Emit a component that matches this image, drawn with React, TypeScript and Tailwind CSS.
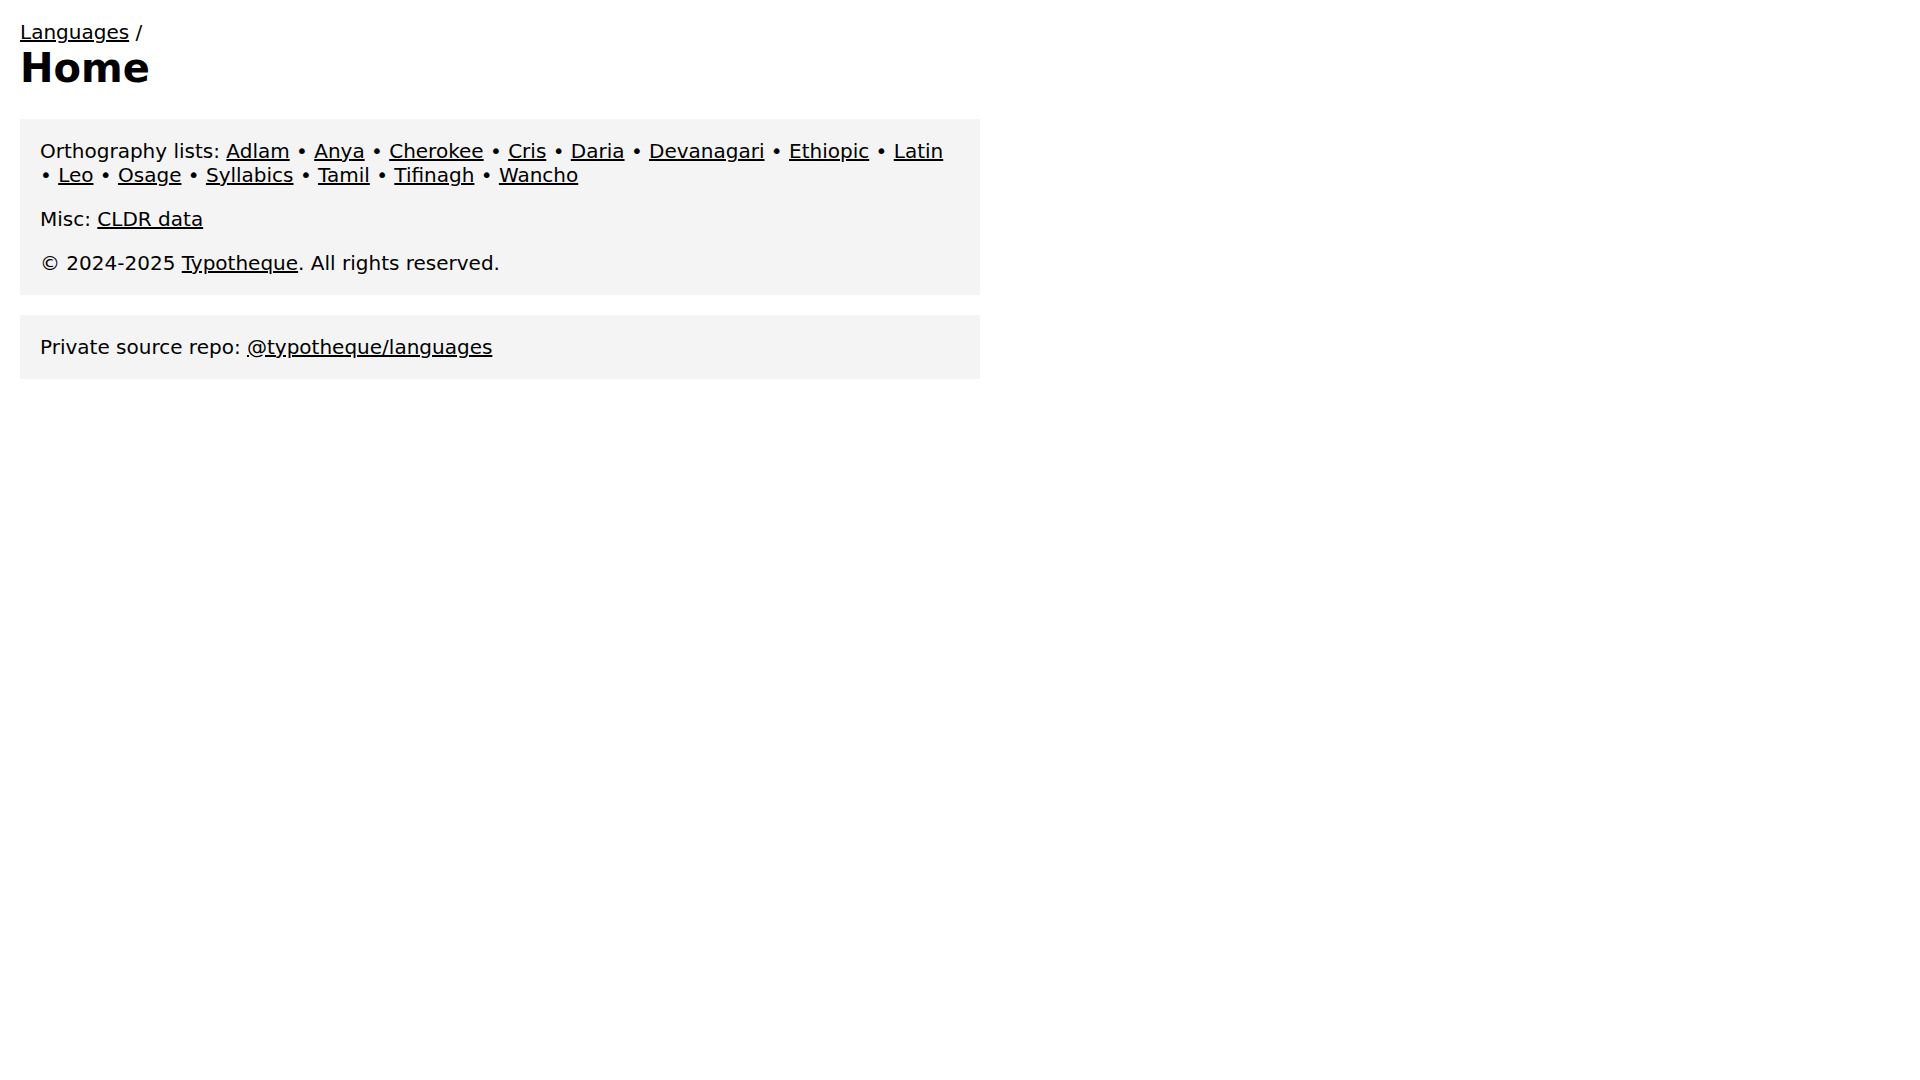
const ORTHOGRAPHIES = [
  'Adlam',
  'Anya',
  'Cherokee',
  'Cris',
  'Daria',
  'Devanagari',
  'Ethiopic',
  'Latin',
  'Leo',
  'Osage',
  'Syllabics',
  'Tamil',
  'Tifinagh',
  'Wancho',
];

function Link({ children }: { children: React.ReactNode }) {
  return (
    <a href="#" className="text-black underline">
      {children}
    </a>
  );
}

export default function App() {
  return (
    <div className="min-h-screen bg-white p-5 text-[20px] leading-[24px] text-black font-['DejaVu_Sans',sans-serif]">
      <header className="mb-[27px]">
        <div>
          <Link>Languages</Link> /
        </div>
        <h1 className="text-[40px] leading-[48px] font-bold">Home</h1>
      </header>

      <div className="w-[960px] space-y-5">
        <section className="bg-[#f4f4f4] p-5 space-y-5">
          <p>
            Orthography lists:{' '}
            {ORTHOGRAPHIES.map((name, i) => (
              <span key={name}>
                {i > 0 && ' • '}
                <Link>{name}</Link>
              </span>
            ))}
          </p>
          <p>
            Misc: <Link>CLDR data</Link>
          </p>
          <p>
            © 2024-2025 <Link>Typotheque</Link>. All rights reserved.
          </p>
        </section>

        <section className="bg-[#f4f4f4] p-5">
          <p>
            Private source repo: <Link>@typotheque/languages</Link>
          </p>
        </section>
      </div>
    </div>
  );
}
